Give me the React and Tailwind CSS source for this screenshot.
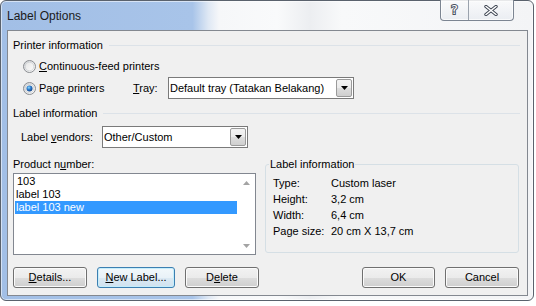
import React from "react";

function Radio({ checked }) {
  return (
    <svg width="13" height="13" viewBox="0 0 13 13" className="shrink-0">
      <defs>
        <linearGradient id={checked ? "rb1" : "rb0"} x1="0" y1="0" x2="1" y2="1">
          <stop offset="0" stopColor="#cfd2d6" />
          <stop offset="1" stopColor="#ffffff" />
        </linearGradient>
        <linearGradient id={checked ? "ri1" : "ri0"} x1="0" y1="0" x2="1" y2="1">
          <stop offset="0" stopColor="#e6e6e6" />
          <stop offset="1" stopColor="#fbfbfb" />
        </linearGradient>
        <radialGradient id="rdot" cx="0.4" cy="0.35" r="0.7">
          <stop offset="0" stopColor="#8fdcfb" />
          <stop offset="0.45" stopColor="#2f7fd0" />
          <stop offset="1" stopColor="#123e80" />
        </radialGradient>
      </defs>
      <circle cx="6.5" cy="6.5" r="6" fill={`url(#${checked ? "rb1" : "rb0"})`} stroke="#8a8d91" strokeWidth="1" />
      <circle cx="6.5" cy="6.5" r="4.3" fill={`url(#${checked ? "ri1" : "ri0"})`} stroke="#c4c7cb" strokeWidth="0.6" />
      {checked && <circle cx="6.5" cy="6.5" r="3" fill="url(#rdot)" />}
    </svg>
  );
}

function DropArrow() {
  return (
    <div className="w-[16px] h-[18px] mr-px border border-[#9a9a9a] rounded-[2px] bg-[linear-gradient(to_bottom,#f3f3f3_0%,#ebebeb_50%,#dddddd_51%,#cfcfcf_100%)] flex items-center justify-center shrink-0">
      <svg width="7" height="4" viewBox="0 0 7 4">
        <path d="M0 0H7L3.5 4Z" fill="#000" />
      </svg>
    </div>
  );
}

function Btn({ children, size, primary }) {
  return (
    <div
      className={
        (size === "wide" ? "w-[78px] " : size === "ok" ? "w-[73px] " : "w-[74px] ") +
        (primary
          ? "border-[#3c7fb1] bg-[linear-gradient(to_bottom,#f2f8fb_0%,#e9f2f8_50%,#dbe9f3_51%,#d0e2ef_100%)] shadow-[inset_0_0_0_1px_#c5edfb] "
          : "border-[#707070] bg-[linear-gradient(to_bottom,#f2f2f2_0%,#ebebeb_50%,#dddddd_51%,#cfcfcf_100%)] shadow-[inset_0_0_0_1px_#fbfbfb] ") +
        "h-[21px] border rounded-[3px] flex items-center justify-center shrink-0"
      }
    >
      {children}
    </div>
  );
}

export default function App() {
  return (
    <div className="w-[536px] h-[306px] bg-white overflow-hidden font-['Liberation_Sans',Arial,sans-serif] text-[11px] leading-[13px] text-black">
      <div className="w-[534px] h-[301px] rounded-[6px] border border-[#5a626d] bg-[linear-gradient(to_right,#a2bfe6_0%,#a8c4e9_36%,#dfe8f4_39%,#f6f7f9_41%,#f9fafb_52%,#eceef1_58%,#f8f9fa_64%,#f3f4f6_100%)] shadow-[inset_0_0_0_1px_rgba(255,255,255,0.55)] flex flex-col">
        <div className="h-[29px] flex items-start shrink-0">
          <div className="pl-[6px] pt-[8px] text-[12px] leading-[14px] text-[#1b1b1b]">Label Options</div>
          <div className="ml-auto mr-[19px] -mt-px flex h-[21px] border border-t-0 border-[#7c8592] rounded-b-[4px] overflow-hidden bg-[linear-gradient(to_bottom,rgba(255,255,255,0.5),rgba(230,234,240,0.7))] shadow-[inset_0_0_0_1px_rgba(255,255,255,0.7)]">
            <div className="w-[28px] h-full border-r border-[#9aa2ad] flex items-center justify-center">
              <span className="text-[13px] leading-[14px] text-white [-webkit-text-stroke:2px_#4a5260] [paint-order:stroke_fill] font-['DejaVu_Sans',sans-serif]">?</span>
            </div>
            <div className="w-[44px] h-full flex items-center justify-center">
              <svg width="14" height="11" viewBox="0 0 14 11">
                <path d="M2 1.5L12 9.5M12 1.5L2 9.5" stroke="#3b4350" strokeWidth="3.4" strokeLinecap="round" />
                <path d="M2 1.5L12 9.5M12 1.5L2 9.5" stroke="#ffffff" strokeWidth="1.6" strokeLinecap="round" />
              </svg>
            </div>
          </div>
        </div>

        <div className="ml-[6px] w-[521px] h-[266px] border border-[#838890] bg-[#f0f0f0] flex flex-col shrink-0">
          {/* Printer information */}
          <div className="mt-[8px] h-[13px] flex items-center pl-[5px] pr-[7px]">
            <span>Printer information</span>
            <div className="flex-1 h-px bg-[#dce2e8] ml-[6px]" />
          </div>
          <div className="mt-[8px] h-[13px] flex items-center pl-[15px]">
            <Radio checked={false} />
            <span className="ml-[3px]">
              <span className="underline">C</span>ontinuous-feed printers
            </span>
          </div>
          <div className="mt-[4px] h-[22px] flex items-center pl-[15px]">
            <div className="w-[110px] flex items-center">
              <Radio checked={true} />
              <span className="ml-[3px]">
                Pa<span className="underline">g</span>e printers
              </span>
            </div>
            <span className="w-[35px]">
              <span className="underline">T</span>ray:
            </span>
            <div className="w-[186px] h-[22px] border border-[#7a7a7a] bg-white flex items-center">
              <span className="flex-1 pl-[1px] whitespace-nowrap">Default tray (Tatakan Belakang)</span>
              <DropArrow />
            </div>
          </div>

          {/* Label information */}
          <div className="mt-[8px] h-[13px] flex items-center pl-[5px] pr-[7px]">
            <span>Label information</span>
            <div className="flex-1 h-px bg-[#dce2e8] ml-[6px]" />
          </div>
          <div className="mt-[6px] h-[22px] flex items-center pl-[13px]">
            <span className="w-[81px]">
              Label <span className="underline">v</span>endors:
            </span>
            <div className="w-[146px] h-[22px] border border-[#7a7a7a] bg-white flex items-center">
              <span className="flex-1 pl-[1px] whitespace-nowrap">Other/Custom</span>
              <DropArrow />
            </div>
          </div>

          {/* Product number + info */}
          <div className="mt-[10px] flex pl-[5px] pr-[8px]">
            <div className="w-[243px] flex flex-col">
              <div className="h-[13px]">
                Product n<span className="underline">u</span>mber:
              </div>
              <div className="mt-[2px] h-[82px] border border-[#828790] bg-white flex">
                <div className="flex-1 p-px flex flex-col">
                  <div className="h-[13px] pl-[2px]">103</div>
                  <div className="h-[13px] pl-[1px]">label 103</div>
                  <div className="h-[13px] pl-[1px] bg-[#3399ff] text-white">label 103 new</div>
                </div>
                <div className="w-[17px] flex flex-col justify-between">
                  <div className="h-[17px] flex items-center justify-center">
                    <svg width="7" height="4" viewBox="0 0 7 4">
                      <path d="M0 4H7L3.5 0Z" fill="#a3a3a3" />
                    </svg>
                  </div>
                  <div className="h-[17px] flex items-center justify-center">
                    <svg width="7" height="4" viewBox="0 0 7 4">
                      <path d="M0 0H7L3.5 4Z" fill="#a3a3a3" />
                    </svg>
                  </div>
                </div>
              </div>
            </div>
            <div className="ml-[9px] w-[254px]">
              <div className="mt-[6px] h-[89px] relative border border-[#d5dfe5] rounded-[3px] pt-[10px] pl-[7px]">
                <span className="absolute left-[3px] -top-[7px] px-px bg-[#f0f0f0] leading-[13px]">Label information</span>
                <div className="h-[16px] flex items-center">
                  <span className="w-[58px]">Type:</span>
                  <span>Custom laser</span>
                </div>
                <div className="h-[16px] flex items-center">
                  <span className="w-[58px]">Height:</span>
                  <span>3,2 cm</span>
                </div>
                <div className="h-[16px] flex items-center">
                  <span className="w-[58px]">Width:</span>
                  <span>6,4 cm</span>
                </div>
                <div className="h-[16px] flex items-center">
                  <span className="w-[58px]">Page size:</span>
                  <span>20 cm X 13,7 cm</span>
                </div>
              </div>
            </div>
          </div>

          {/* Buttons */}
          <div className="mt-[12px] h-[21px] flex pl-[5px] pr-[8px]">
            <Btn>
              <span>
                <span className="underline">D</span>etails...
              </span>
            </Btn>
            <div className="ml-[10px]">
              <Btn size="wide" primary>
                <span>
                  <span className="underline">N</span>ew Label...
                </span>
              </Btn>
            </div>
            <div className="ml-[10px]">
              <Btn>
                <span>
                  D<span className="underline">e</span>lete
                </span>
              </Btn>
            </div>
            <div className="ml-auto">
              <Btn size="ok">OK</Btn>
            </div>
            <div className="ml-[10px]">
              <Btn>Cancel</Btn>
            </div>
          </div>
        </div>
      </div>
    </div>
  );
}
